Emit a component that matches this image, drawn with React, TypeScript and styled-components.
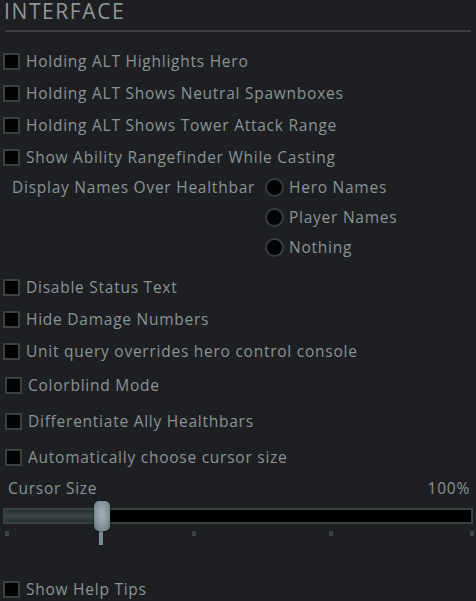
import React from 'react';
import styled, { createGlobalStyle } from 'styled-components';

const GlobalStyle = createGlobalStyle`
    html, body {
        margin: 0;
        padding: 0;
        background: #1e1f23;
    }
    body {
        font-family: "Open Sans", "Lato", sans-serif;
        color: #8a9493;
    }
`;

const Page = styled.div`
    width: 476px;
    height: 601px;
    overflow: hidden;
    background: #1e1f23;
`;

const Header = styled.div`
    padding: 0 5px 0 4px;
`;

const Title = styled.h2`
    margin: 0;
    height: 30px;
    line-height: 23px;
    font-size: 21px;
    font-weight: 400;
    letter-spacing: 1.6px;
    color: #8e9898;
`;

const Divider = styled.div`
    height: 2px;
    margin-left: 1px;
    background: #3b3d40;
`;

const Row = styled.div<{ top?: number; indent?: number }>`
    display: flex;
    align-items: center;
    height: 32px;
    margin-top: ${p => p.top ?? 0}px;
    padding-left: ${p => 3 + (p.indent ?? 0)}px;
`;

const Box = styled.span`
    flex: none;
    width: 13px;
    height: 13px;
    border: 2px solid #3a413f;
    background: #020202;
    margin-right: 6px;
`;

const Label = styled.span`
    font-size: 15.5px;
    letter-spacing: 0.75px;
    color: #8a9493;
    white-space: nowrap;
`;

const RadioBlock = styled.div`
    display: flex;
    margin-top: -1px;
`;

const RadioLabel = styled.div`
    width: 253px;
    padding-left: 12px;
    height: 30px;
    display: flex;
    align-items: center;
`;

const RadioList = styled.div`
    display: flex;
    flex-direction: column;
`;

const RadioRow = styled.div`
    display: flex;
    align-items: center;
    height: 30px;
`;

const Circle = styled.span`
    flex: none;
    width: 15px;
    height: 15px;
    border-radius: 50%;
    border: 2px solid #363c3a;
    background: #030303;
    margin-right: 5px;
`;

const SliderHead = styled.div`
    display: flex;
    justify-content: space-between;
    align-items: center;
    height: 22px;
    margin-top: 4px;
    padding: 0 6px 0 8px;
`;

const Slider = styled.div`
    position: relative;
    margin: 0 3px;
    height: 46px;
`;

const Track = styled.div`
    position: absolute;
    left: 0;
    right: 0;
    top: 9px;
    height: 12px;
    border: 2px solid #39423f;
    background: #010101;
`;

const Fill = styled.div`
    height: 100%;
    background: linear-gradient(180deg, #283030 0%, #3c4848 50%, #283030 100%);
`;

const Handle = styled.div`
    position: absolute;
    top: 2px;
    width: 16px;
    height: 30px;
    border-radius: 5px;
    background: radial-gradient(ellipse at 50% 45%, #a3b0b8 0%, #8896a0 50%, #66727a 100%);
    box-shadow: 0 0 2px rgba(0, 0, 0, 0.8);
`;

const Pointer = styled.div`
    position: absolute;
    top: 32px;
    width: 4px;
    height: 14px;
    background: #7d8a92;
`;

const Tick = styled.div`
    position: absolute;
    top: 32px;
    width: 4px;
    height: 5px;
    background: #3a4442;
`;

const checks1 = [
    'Holding ALT Highlights Hero',
    'Holding ALT Shows Neutral Spawnboxes',
    'Holding ALT Shows Tower Attack Range',
    'Show Ability Rangefinder While Casting',
];

const checks2 = [
    'Disable Status Text',
    'Hide Damage Numbers',
    'Unit query overrides hero control console',
];

const radios = ['Hero Names', 'Player Names', 'Nothing'];

const ticks = [2, 189, 326, 467];

const App: React.FC = () => {
    const handleX = 91;

    return (
        <Page>
            <GlobalStyle />
            <Header>
                <Title>INTERFACE</Title>
                <Divider />
            </Header>
            <div style={{ height: 13 }} />
            {checks1.map(text => (
                <Row key={text}>
                    <Box />
                    <Label>{text}</Label>
                </Row>
            ))}
            <RadioBlock>
                <RadioLabel>
                    <Label>Display Names Over Healthbar</Label>
                </RadioLabel>
                <RadioList>
                    {radios.map(r => (
                        <RadioRow key={r}>
                            <Circle />
                            <Label>{r}</Label>
                        </RadioRow>
                    ))}
                </RadioList>
            </RadioBlock>
            <Row top={9}>
                <Box />
                <Label>{checks2[0]}</Label>
            </Row>
            <Row>
                <Box />
                <Label>{checks2[1]}</Label>
            </Row>
            <Row>
                <Box />
                <Label>{checks2[2]}</Label>
            </Row>
            <Row top={2} indent={2}>
                <Box />
                <Label>Colorblind Mode</Label>
            </Row>
            <Row top={4} indent={2}>
                <Box />
                <Label>Differentiate Ally Healthbars</Label>
            </Row>
            <Row top={4} indent={2}>
                <Box />
                <Label>Automatically choose cursor size</Label>
            </Row>
            <SliderHead>
                <Label>Cursor Size</Label>
                <Label>100%</Label>
            </SliderHead>
            <Slider>
                <Track>
                    <Fill style={{ width: handleX }} />
                </Track>
                {ticks.map(t => (
                    <Tick key={t} style={{ left: t }} />
                ))}
                <Pointer style={{ left: handleX + 5 }} />
                <Handle style={{ left: handleX }} />
            </Slider>
            <Row top={28}>
                <Box />
                <Label>Show Help Tips</Label>
            </Row>
        </Page>
    );
};

export default App;
